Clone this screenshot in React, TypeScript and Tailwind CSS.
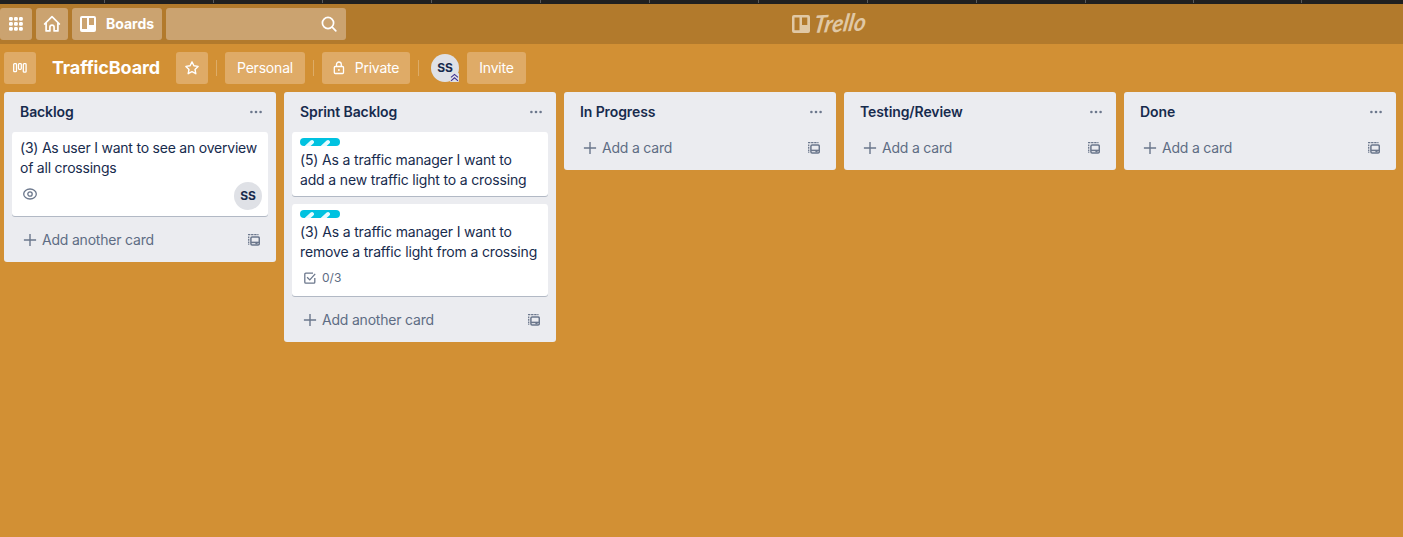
import React from "react";

function TemplateIcon() {
  return (
    <svg width="12" height="12" viewBox="0 0 12 12" fill="none" stroke="#6b778c" strokeWidth="1.5">
      <rect x="2.9" y="3" width="8.4" height="8" rx="1.2" />
      <path d="M3 8.4h8.2" />
      <path d="M7.4 9.5h2.2" />
      <path d="M0 .7h10.5" strokeDasharray="2.4 .7" strokeWidth="1.3" />
      <path d="M.7 2.4v8.6" strokeDasharray="1.8 .8" strokeWidth="1.3" />
    </svg>
  );
}

function AddRow({ label }: { label: string }) {
  return (
    <div className="flex h-7 items-center pr-4 pl-[19px] text-[#5e6c84]">
      <svg width="14" height="14" viewBox="0 0 14 14" stroke="#6b778c" strokeWidth="1.4" className="mr-[5px]">
        <path d="M.9 7h12.2M7 .9v12.2" />
      </svg>
      <span className="tracking-[-0.2px] whitespace-nowrap">{label}</span>
      <div className="ml-auto"><TemplateIcon /></div>
    </div>
  );
}

type ListProps = { title: string; add: string; children?: React.ReactNode };

function List({ title, add, children }: ListProps) {
  return (
    <section className="w-[272px] shrink-0 rounded-[3px] bg-[#ebecf0] pb-2">
      <header className="flex h-10 items-center justify-between pr-3.5 pl-4 text-[#172b4d]">
        <h2 className="font-semibold tracking-[-0.1px] whitespace-nowrap">{title}</h2>
        <svg width="12" height="4" viewBox="0 0 12 4" fill="#6b778c">
          <circle cx="1.4" cy="2" r="1.3" /><circle cx="6" cy="2" r="1.3" /><circle cx="10.6" cy="2" r="1.3" />
        </svg>
      </header>
      {children}
      <div className="pt-0.5"><AddRow label={add} /></div>
    </section>
  );
}

function Card({ className = "", children }: { className?: string; children: React.ReactNode }) {
  return (
    <article className={"mx-2 mb-2 rounded-[3px] bg-white px-2 pt-1.5 text-[#172b4d] shadow-[0_1px_0_#091e4240] " + className}>
      {children}
    </article>
  );
}

function Label() {
  return (
    <svg width="40" height="8" viewBox="0 0 40 8" className="mb-1 block overflow-hidden rounded-full">
      <rect width="40" height="8" fill="#00c2e0" />
      <path d="M6 9.5 12 4M22 9.5 28 4" stroke="#e6fbff" strokeWidth="4" strokeLinecap="round" />
    </svg>
  );
}

const Divider = () => <span className="ml-2 h-4 w-px bg-white/25" />;

const headerButton = "flex h-8 items-center rounded-[3px] bg-[#cba370]";
const boardButton = "flex h-8 items-center justify-center rounded-[3px] bg-[#dfab67] tracking-[-0.2px]";
const tabWidths = [105, 109, 109, 109, 109, 109, 109, 109, 109, 109, 108, 108];

export default function App() {
  return (
    <div className="h-[537px] w-[1403px] overflow-hidden bg-[#d29034] font-['Inter','Liberation_Sans',sans-serif] text-sm leading-5">
      <div className="flex h-1 bg-[#202020]">
        {tabWidths.map((w, i) => (
          <span key={i} className="h-[3px] shrink-0 border-r border-[#5a5a5a]" style={{ width: w }} />
        ))}
      </div>
      <nav className="flex h-10 items-center bg-[#b27a2c] text-white">
        <div className="flex w-[720px] items-center gap-1">
          <button className={headerButton + " w-8 justify-center"}>
            <svg width="14" height="14" viewBox="0 0 14 14" fill="white">
              {[0, 5, 10].map((y) => [0, 5, 10].map((x) => <rect key={x + "-" + y} x={x} y={y} width="3.8" height="3.8" rx="1.2" />))}
            </svg>
          </button>
          <button className={headerButton + " w-8 justify-center"}>
            <svg width="18" height="18" viewBox="0 0 18 18" fill="none" stroke="white" strokeWidth="1.7" strokeLinejoin="round" strokeLinecap="round">
              <path d="M1.6 9 9 1.7 16.4 9M3.1 8v7.9h3.8v-3.6a2.1 2.1 0 0 1 4.2 0v3.6h3.8V8" />
            </svg>
          </button>
          <button className={headerButton + " w-[90px] gap-2.5 pl-2"}>
            <svg width="16" height="16" viewBox="0 0 16 16">
              <path fillRule="evenodd" fill="white" d="M2 0h12a2 2 0 0 1 2 2v12a2 2 0 0 1-2 2H2a2 2 0 0 1-2-2V2a2 2 0 0 1 2-2ZM2 2v11h5V2ZM9 2v7h5V2Z" />
            </svg>
            <span className="font-bold">Boards</span>
          </button>
          <div className={headerButton + " w-[180px] justify-end pr-[9px]"}>
            <svg width="16" height="16" viewBox="0 0 16 16" fill="none" stroke="white" strokeWidth="1.7" strokeLinecap="round">
              <circle cx="7" cy="7" r="5.6" /><path d="m11.2 11.2 3.6 3.6" />
            </svg>
          </div>
        </div>
        <div className="ml-[72px] flex items-center text-[#e0c8a5]">
          <svg width="18" height="18" viewBox="0 0 18 18">
            <path fillRule="evenodd" fill="currentColor" d="M2 0h14a2 2 0 0 1 2 2v14a2 2 0 0 1-2 2H2a2 2 0 0 1-2-2V2a2 2 0 0 1 2-2ZM2.5 2.5v12.8h5V2.5ZM10 2.5v7.5h5.3V2.5Z" />
          </svg>
          <svg width="54" height="24" viewBox="0 0 54 24" className="ml-1 overflow-visible">
            <text x="3" y="20" transform="rotate(-3 20 20) skewX(-12)" fill="currentColor" fontSize="24" fontWeight="700" fontStyle="italic" fontFamily="Lato" textLength="52" lengthAdjust="spacingAndGlyphs">Trello</text>
          </svg>
        </div>
      </nav>
      <div className="flex h-12 items-center px-1 text-white">
        <button className={boardButton + " w-8"}>
          <svg width="14" height="10" viewBox="0 0 14 10" fill="none" stroke="white" strokeWidth="1.3">
            <rect x=".7" y=".7" width="2.8" height="8" rx=".8" /><rect x="5.5" y=".7" width="2.8" height="5.6" rx=".8" /><rect x="10.3" y=".7" width="2.8" height="8.5" rx=".8" />
          </svg>
        </button>
        <h1 className="ml-4 w-[108px] text-lg leading-6 font-bold tracking-[-0.13px] whitespace-nowrap">TrafficBoard</h1>
        <button className={boardButton + " ml-4 w-8"}>
          <svg width="14" height="14" viewBox="0 0 14 14" fill="none" stroke="white" strokeWidth="1.4" strokeLinejoin="round">
            <path d="m7 .9 1.9 3.9 4.2.6-3.1 3 .8 4.3L7 10.7l-3.8 2 .8-4.3-3.1-3 4.2-.6Z" />
          </svg>
        </button>
        <Divider />
        <button className={boardButton + " ml-2 w-20"}>Personal</button>
        <Divider />
        <button className={boardButton + " ml-2 w-[88px] gap-2.5"}>
          <svg width="12" height="14" viewBox="0 0 12 14" fill="none" stroke="white" strokeWidth="1.3">
            <rect x="1.3" y="5.5" width="9.2" height="7" rx="1" /><path d="M3.5 5.5V3.4a2.4 2.4 0 0 1 4.8 0v2.1" /><circle cx="5.9" cy="9" r=".9" fill="white" stroke="none" />
          </svg>
          <span>Private</span>
        </button>
        <Divider />
        <div className="relative ml-3 flex h-7 w-7 items-center justify-center rounded-full bg-[#dfe1e6] text-xs font-bold text-[#172b4d]">
          SS
          <svg width="9" height="9" viewBox="0 0 9 9" className="absolute right-0 bottom-0 rounded-[1px] bg-[#dfe1e6]" fill="none" stroke="#403294" strokeWidth="1.1">
            <path d="m1 4.4 3.5-3 3.5 3M1 7.8l3.5-3 3.5 3" />
          </svg>
        </div>
        <button className={boardButton + " ml-2 w-[59px]"}>Invite</button>
      </div>
      <main className="flex items-start gap-2 px-1">
        <List title="Backlog" add="Add another card">
          <Card className="h-[84px]">
            <p className="tracking-[-0.22px] whitespace-nowrap">(3) As user I want to see an overview<br />of all crossings</p>
            <div className="flex justify-between">
              <svg width="14" height="12" viewBox="0 0 14 12" fill="none" stroke="#6b778c" strokeWidth="1.3" className="mt-[10px] ml-[3px]">
                <ellipse cx="7" cy="6" rx="6.3" ry="5" /><circle cx="7" cy="6" r="2.2" />
              </svg>
              <div className="mt-1 -mr-0.5 flex h-7 w-7 items-center justify-center rounded-full bg-[#dfe1e6] text-xs font-bold">SS</div>
            </div>
          </Card>
        </List>
        <List title="Sprint Backlog" add="Add another card">
          <Card className="h-16">
            <Label />
            <p className="tracking-[-0.16px] whitespace-nowrap">(5) As a traffic manager I want to<br />add a new traffic light to a crossing</p>
          </Card>
          <Card className="h-[92px]">
            <Label />
            <p className="tracking-[-0.16px] whitespace-nowrap">(3) As a traffic manager I want to<br />remove a traffic light from a crossing</p>
            <div className="mt-1.5 ml-1 flex h-5 items-center gap-1.5 text-xs text-[#5e6c84]">
              <svg width="12" height="12" viewBox="0 0 12 12" fill="none" stroke="#6b778c" strokeWidth="1.3">
                <path d="M9 1.2H1.8a1 1 0 0 0-1 1v8a1 1 0 0 0 1 1h8a1 1 0 0 0 1-1V6M3.1 5.2l2.7 2.7 5.4-6" />
              </svg>
              <span>0/3</span>
            </div>
          </Card>
        </List>
        <List title="In Progress" add="Add a card" />
        <List title="Testing/Review" add="Add a card" />
        <List title="Done" add="Add a card" />
      </main>
    </div>
  );
}
